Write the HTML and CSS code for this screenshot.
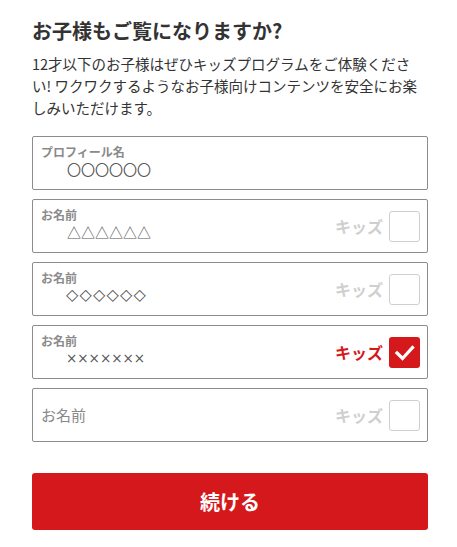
FILE: index.html
```html
<!DOCTYPE html>
<html lang="ja">
<head>
<meta charset="utf-8">
<title>お子様もご覧になりますか?</title>
<link rel="stylesheet" href="styles.css">
</head>
<body>
<main class="page">
  <h1 class="title">お子様もご覧になりますか?</h1>
  <p class="lead">12才以下のお子様はぜひキッズプログラムをご体験ください! ワクワクするようなお子様向けコンテンツを安全にお楽しみいただけます。</p>
  <form class="profiles">
    <div class="field">
      <div class="field-text">
        <span class="label">プロフィール名</span>
        <span class="value">〇〇〇〇〇〇</span>
      </div>
    </div>
    <div class="field">
      <div class="field-text">
        <span class="label">お名前</span>
        <span class="value">△△△△△△</span>
      </div>
      <div class="kids"><span class="kids-label">キッズ</span><span class="check"></span></div>
    </div>
    <div class="field">
      <div class="field-text">
        <span class="label">お名前</span>
        <span class="value value-diamond">◇◇◇◇◇◇</span>
      </div>
      <div class="kids"><span class="kids-label">キッズ</span><span class="check"></span></div>
    </div>
    <div class="field">
      <div class="field-text">
        <span class="label">お名前</span>
        <span class="value value-latin">×××××××</span>
      </div>
      <div class="kids is-on"><span class="kids-label">キッズ</span><span class="check"><svg viewBox="0 0 31 31" width="31" height="31"><path d="M8 16 L13.5 21.5 L23.5 10.5" fill="none" stroke="#fff" stroke-width="3.2" stroke-linecap="square"/></svg></span></div>
    </div>
    <div class="field">
      <div class="field-text">
        <span class="placeholder">お名前</span>
      </div>
      <div class="kids"><span class="kids-label">キッズ</span><span class="check"></span></div>
    </div>
    <button type="button" class="continue">続ける</button>
  </form>
</main>
</body>
</html>
```

FILE: styles.css
```css
* { box-sizing: border-box; }
html, body { margin: 0; padding: 0; background: #fff; }
body {
  font-family: "Noto Sans CJK JP", "Noto Sans", sans-serif;
  color: #333;
}
.page {
  width: 396px;
  margin-left: 32px;
  padding-top: 17px;
}
.title {
  margin: 0;
  font-size: 20px;
  line-height: 28px;
  font-weight: 700;
  color: #333;
}
.lead {
  margin: 8px 0 0;
  width: 388px;
  font-size: 14.5px;
  line-height: 22px;
  color: #333;
}
.profiles {
  margin-top: 17px;
  display: flex;
  flex-direction: column;
  gap: 9px;
}
.field {
  height: 54px;
  border: 1px solid #8c8c8c;
  border-radius: 2px;
  display: flex;
  align-items: center;
  padding: 0 7px 0 8px;
}
.field-text {
  flex: 1;
  display: flex;
  flex-direction: column;
}
.label {
  font-size: 12px;
  line-height: 16px;
  font-weight: 700;
  color: #8a8a8a;
  margin-top: -4px;
}
.value {
  font-size: 14px;
  line-height: 20px;
  color: #555;
  margin-left: 26px;
  margin-top: -1px;
}
.value-latin {
  font-family: "DejaVu Sans", sans-serif;
  font-size: 13.5px;
  margin-left: 25px;
}
.value-diamond {
  font-family: "DejaVu Sans", sans-serif;
  font-size: 16px;
  letter-spacing: 1.2px;
  margin-left: 25px;
}
.placeholder {
  font-size: 15px;
  line-height: 20px;
  color: #888;
}
.kids {
  display: flex;
  align-items: center;
  gap: 6px;
}
.kids-label {
  font-size: 16px;
  font-weight: 700;
  color: #cfcfcf;
  line-height: 20px;
}
.check {
  width: 31px;
  height: 31px;
  border: 1px solid #cfcfcf;
  border-radius: 3px;
  display: block;
}
.is-on .kids-label { color: #d5181b; }
.is-on .check {
  border: none;
  background: #d5181b;
}
.check svg { display: block; }
.continue {
  margin-top: 22px;
  height: 57px;
  width: 100%;
  border: none;
  border-radius: 3px;
  background: #d5181b;
  color: #fff;
  font-family: inherit;
  font-size: 20px;
  font-weight: 700;
  cursor: pointer;
}
```
